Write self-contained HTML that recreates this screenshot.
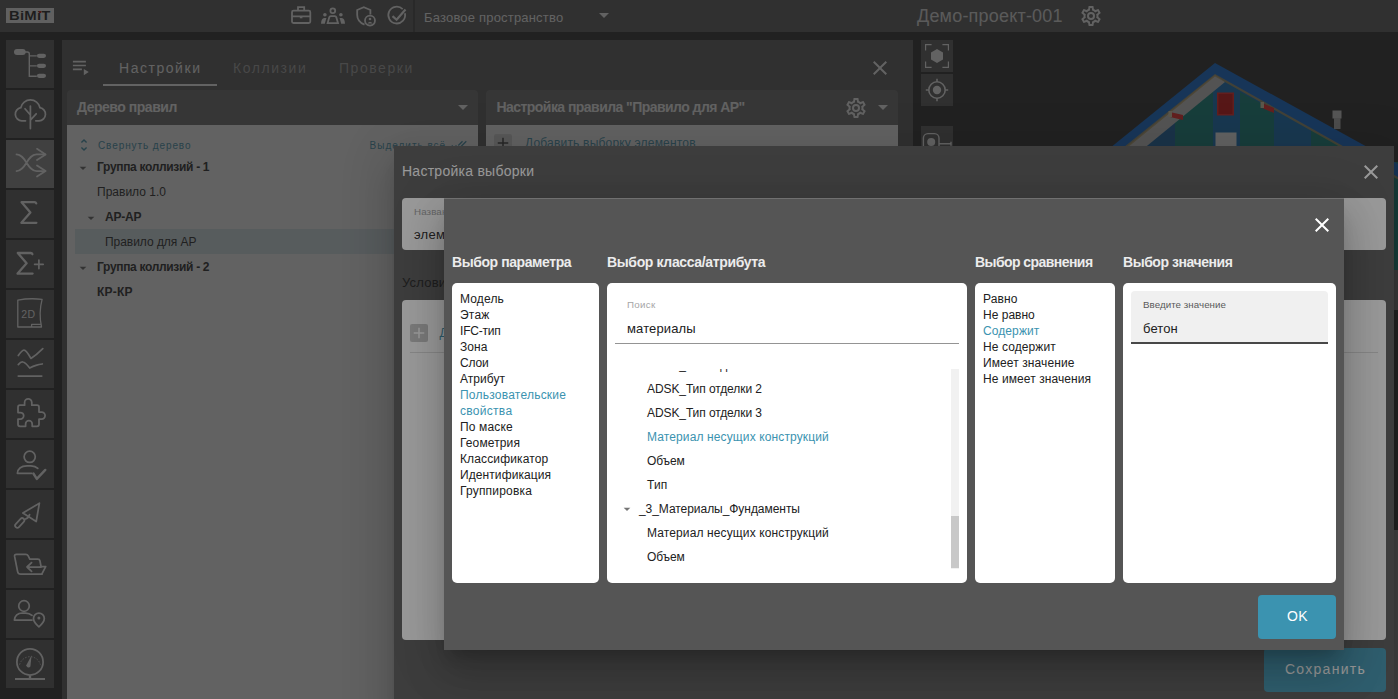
<!DOCTYPE html>
<html lang="ru">
<head>
<meta charset="utf-8">
<title>BIMIT</title>
<style>
*{box-sizing:border-box;margin:0;padding:0}
html,body{width:1398px;height:699px;overflow:hidden;background:#242424}
body{font-family:"Liberation Sans",sans-serif;position:relative;color:#212121}
.abs,.t,.layer,svg.i{position:absolute}
.t{white-space:nowrap;display:block}
.layer{left:0;top:0;width:1398px;height:699px;overflow:hidden}
.scrim{background:rgba(33,33,33,.46)}
/* top bar */
#topbar{left:0;top:0;width:1398px;height:32px;background:#555}
.sb{position:absolute;left:6px;width:48px;height:48px;background:#555}
.sb.sel{background:#8d8d8d}
.tool{position:absolute;left:921px;width:32px;height:32px;background:#555}
#panel{left:62px;top:40px;width:851px;height:659px;background:#555}
.hdr{position:absolute;top:50px;height:35px;background:#6b6b6b;border-radius:4px 4px 0 0}
.hdr .t{font-weight:bold;font-size:14px;line-height:20px;top:7px;color:#fff}
.tab{font-size:14px;letter-spacing:1.25px;line-height:20px;top:18px;color:#a8a8a8}
.tr{font-size:12px;line-height:25px;color:#212121}
.tr.b{font-weight:bold}
.lnk{font-size:10px;letter-spacing:.89px;line-height:16px;color:#3b93b0}
/* dialogs */
.dlg{position:absolute;background:#555;box-shadow:0 11px 15px -7px rgba(0,0,0,.2),0 24px 38px 3px rgba(0,0,0,.14),0 9px 46px 8px rgba(0,0,0,.12)}
.box{position:absolute;background:#fff;border-radius:5px;top:85px;height:300px}
.h2{font-weight:bold;font-size:14px;line-height:20px;top:54px;color:#ececec}
.li{font-size:12px;line-height:16px;color:#212121}
.li.a,.row.a{color:#3b93b0}
.row{font-size:12px;line-height:24px;color:#212121}
.lab{font-size:9.75px;line-height:14px}
.val{font-size:13px;line-height:18px;color:#212121}
.btn{position:absolute;background:#3b93b0;border-radius:4px}
.btn .t{font-size:14px;letter-spacing:1.25px;color:#fff;line-height:20px}
</style>
</head>
<body>
<!-- ================= BASE ================= -->
<div class="layer" id="base">
  <div class="abs" id="topbar"></div>
  <div class="abs" style="left:6px;top:8px;width:48px;height:15px;background:#fafafa;overflow:hidden">
  <span class="t" style="left:3px;top:0;font-size:12.500px;line-height:16px;font-weight:bold;color:#1a1a1a;letter-spacing:.2px;transform-origin:0 50%;transform:scaleX(1.19)">BiMiT</span>
  <div class="abs" style="left:33px;top:3px;width:2.200px;height:2.200px;background:#d00000"></div>
</div>
<svg class="i" style="left:286px;top:2px" width="128" height="28" viewBox="286 2 128 28" fill="none" stroke="#fff" stroke-width="1.800">
  <!-- briefcase -->
  <rect x="292" y="10.7" width="18.3" height="12.3" rx="1.5"/>
  <path d="M298 10.5V7.2h6.2v3.3M292 16.3h18.3"/>
  <rect x="299.8" y="16.3" width="2.6" height="2" fill="#fff" stroke="none"/>
  <!-- people -->
  <circle cx="332.8" cy="10.7" r="2.4"/>
  <path d="M327.6 23.2l1.6-5.8q.4-1.2 1.6-1.2h4q1.2 0 1.6 1.2l1.6 5.8z"/>
  <circle cx="324.9" cy="14.8" r="1.8" fill="#fff" stroke="none"/>
  <circle cx="340.9" cy="14.8" r="1.8" fill="#fff" stroke="none"/>
  <path d="M321 23.8q.3-5.6 3.2-5.8h2.2l-1.6 5.8zM345 23.8q-.3-5.6-3.2-5.8h-2.2l1.6 5.8z" fill="#fff" stroke="none"/>
  <!-- shield -->
  <path d="M364.5 24.6c-4.600-1.800-7.300-5.200-7.300-9.600V10l6.600-2.800 6.600 2.800v4.600"/>
  <circle cx="370" cy="20.600" r="5"/>
  <circle cx="370" cy="19" r="1.300" fill="#fff" stroke="none"/>
  <path d="M367.400 23.600q2.600-3.600 5.200 0z" fill="#fff" stroke="none"/>
  <!-- check circle -->
  <path d="M402.700 9.200a8.400 8.400 0 1 0 2.200 4"/>
  <path d="M392.500 16.200l4.100 3.600 8.900-10.300" stroke-width="2.200"/>
</svg>
<div class="abs" style="left:413px;top:0;width:2px;height:32px;background:#3f3f3f"></div>
<span class="t" style="letter-spacing:0.19px;left:424px;top:9px;font-size:13px;line-height:18px;color:#fff">Базовое пространство</span>
<svg class="i" style="left:591.500px;top:3px" width="24" height="24" viewBox="0 0 24 24"><path fill="#fff" d="M7,10L12,15L17,10H7Z"/></svg>
<span class="t" style="letter-spacing:0.2px;left:917px;top:4px;font-size:18px;line-height:24px;color:#e6e6e6">Демо-проект-001</span>
<svg class="i" style="left:1080.600px;top:6px" width="20" height="20" viewBox="2 2 20 20"><path fill="#fff" d="M12,8A4,4 0 0,1 16,12A4,4 0 0,1 12,16A4,4 0 0,1 8,12A4,4 0 0,1 12,8M12,10A2,2 0 0,0 10,12A2,2 0 0,0 12,14A2,2 0 0,0 14,12A2,2 0 0,0 12,10M10,22C9.750,22 9.540,21.820 9.500,21.580L9.130,18.930C8.500,18.680 7.960,18.340 7.440,17.940L4.950,18.950C4.730,19.030 4.460,18.950 4.340,18.730L2.340,15.270C2.210,15.050 2.270,14.780 2.460,14.630L4.570,12.970L4.500,12L4.570,11L2.460,9.370C2.270,9.220 2.210,8.950 2.340,8.730L4.340,5.270C4.460,5.050 4.730,4.960 4.950,5.050L7.440,6.050C7.960,5.660 8.500,5.320 9.130,5.070L9.500,2.420C9.540,2.180 9.750,2 10,2H14C14.250,2 14.460,2.180 14.500,2.420L14.870,5.070C15.500,5.320 16.040,5.660 16.560,6.050L19.050,5.050C19.270,4.960 19.540,5.050 19.660,5.270L21.660,8.730C21.790,8.950 21.730,9.220 21.540,9.370L19.430,11L19.500,12L19.430,13L21.540,14.630C21.730,14.780 21.790,15.050 21.660,15.270L19.660,18.730C19.540,18.950 19.270,19.040 19.050,18.950L16.560,17.950C16.040,18.340 15.500,18.680 14.870,18.930L14.500,21.580C14.460,21.820 14.250,22 14,22H10M11.250,4L10.880,6.610C9.680,6.860 8.620,7.500 7.850,8.390L5.440,7.350L4.690,8.650L6.800,10.200C6.400,11.370 6.400,12.640 6.800,13.800L4.680,15.360L5.430,16.660L7.860,15.620C8.630,16.500 9.680,17.140 10.870,17.380L11.240,20H12.760L13.130,17.390C14.320,17.140 15.370,16.500 16.140,15.620L18.570,16.660L19.320,15.360L17.200,13.810C17.600,12.640 17.600,11.370 17.200,10.200L19.310,8.650L18.560,7.350L16.150,8.390C15.380,7.500 14.320,6.860 13.120,6.620L12.750,4H11.250Z"/></svg>

  <!-- 1 tree -->
<div class="sb" style="top:40px"><svg width="48" height="48" viewBox="0 0 48 48" fill="none" stroke="#fff" stroke-width="1.400">
  <rect x="8" y="9" width="11.700" height="6" rx="3" fill="#fff" stroke="none"/>
  <path d="M19 12h2.300q2 0 2 2v22.200h7.500M23.300 15.900h7.500M23.300 25.900h7.500"/>
  <rect x="30.900" y="13.700" width="9.100" height="4.300" rx="2.150" fill="#fff" stroke="none"/>
  <rect x="30.900" y="23.700" width="9.100" height="4.300" rx="2.150" fill="#fff" stroke="none"/>
  <rect x="30.900" y="33.700" width="9.100" height="4.300" rx="2.150" fill="#fff" stroke="none"/>
</svg></div>
<!-- 2 cloud tree -->
<div class="sb" style="top:90px"><svg width="48" height="48" viewBox="0 0 48 48" fill="none" stroke="#fff" stroke-width="1.750" stroke-linecap="round">
  <path d="M19.500 30.800h-3.700a6.600 6.600 0 0 1-1-13.100a9.800 9.800 0 0 1 19.200 0a6.600 6.600 0 0 1-1 13.100h-3.200"/>
  <path d="M24.400 16v22.600M19 18.800l5.400 6.200M30.200 23.800l-5.800 6.400"/>
</svg></div>
<!-- 3 shuffle -->
<div class="sb sel" style="top:140px"><svg width="48" height="48" viewBox="0 0 48 48" fill="none" stroke="#fff" stroke-width="1.750" stroke-linecap="round" stroke-linejoin="round">
  <path d="M10.500 14.400c9.500 0 10.500 16.600 20 16.600h8.500M10.500 31c9.500 0 10.500-16.600 20-16.600h8.500"/>
  <path d="M31 8.800l8.600 5.600-8.600 5.600M31 25.400l8.600 5.600-8.600 5.600"/>
</svg></div>
<!-- 4 sigma -->
<div class="sb" style="top:190px"><svg width="48" height="48" viewBox="0 0 48 48" fill="none" stroke="#fff" stroke-width="2.300" stroke-linecap="round" stroke-linejoin="round">
  <path d="M30.200 13.400q-.4-1.200-1.600-1.200H15.600l8.800 10.300-9 10.300h15"/>
</svg></div>
<!-- 5 sigma plus -->
<div class="sb" style="top:240px"><svg width="48" height="48" viewBox="0 0 48 48" fill="none" stroke="#fff" stroke-width="2.300" stroke-linecap="round" stroke-linejoin="round">
  <path d="M26.400 14.200q-.4-1.200-1.600-1.200H11.800l8.800 10.300-9 10.300h15"/>
  <path d="M28.600 24.300h8.600M32.900 20v8.600" stroke-width="1.700"/>
</svg></div>
<!-- 6 2D sheet -->
<div class="sb" style="top:290px"><svg width="48" height="48" viewBox="0 0 48 48" fill="none" stroke="#fff" stroke-width="1.300" stroke-linejoin="round">
  <path d="M11.800 10.200q12-2.400 24.300-.8q-3.600 13.500-.6 27.600H11.800z"/>
  <path d="M25.600 37v-2.600h9.500"/>
  <text x="15.300" y="27.800" font-size="10.500" fill="#fff" stroke="none" letter-spacing=".3">2D</text>
</svg></div>
<!-- 7 chart -->
<div class="sb" style="top:340px"><svg width="48" height="48" viewBox="0 0 48 48" fill="none" stroke="#fff" stroke-width="1.750" stroke-linecap="round" stroke-linejoin="round">
  <path d="M12.300 15.500q3.500-5.200 5.700-5.500 2.400 0 6.900 8.400 5.500-3.400 11.900-9.800"/>
  <path d="M12.300 24.600q2.600-3 4.600-2.600 2.400.4 6.800 6 3.600-2 6.300-2.700 3-.8 6.300-1.300"/>
  <path d="M12.300 36h23.400"/>
</svg></div>
<!-- 8 puzzle -->
<div class="sb" style="top:390px"><svg width="48" height="48" viewBox="0 0 48 48" fill="none" stroke="#fff" stroke-width="1.750" stroke-linejoin="round">
  <path d="M18.600 15.200v-2.800a3.600 3.600 0 0 1 7.200 0v2.800h5.200q2 0 2 2v4.900h2.600a3.500 3.500 0 0 1 0 7h-2.600v5.200q0 2-2 2h-4.800v-2.400a3.300 3.300 0 0 0-6.600 0v2.400h-5.600q-2 0-2-2v-5.200h2.400a3.300 3.300 0 0 0 0-6.600h-2.400v-5.300q0-2 2-2z"/>
</svg></div>
<!-- 9 account check -->
<div class="sb" style="top:440px"><svg width="48" height="48" viewBox="0 0 48 48" fill="none" stroke="#fff" stroke-width="1.750" stroke-linecap="round" stroke-linejoin="round">
  <circle cx="23.700" cy="16.800" r="5.600"/>
  <path d="M25.600 33.300H11.400q.6-7.300 9.600-7.500h4q4.400.1 6.800 2.600"/>
  <path d="M27.400 33.500l3.400 5.400 8.500-9" stroke-width="2.400"/>
</svg></div>
<!-- 10 trowel -->
<div class="sb" style="top:490px"><svg width="48" height="48" viewBox="0 0 48 48" fill="none" stroke="#fff" stroke-width="1.750" stroke-linecap="round" stroke-linejoin="round">
  <path d="M33.400 13.200L16.900 23l13.300 8.500z"/>
  <path d="M23.600 24.600q-1.200 3.500-4.200 4.400"/>
  <rect x="8" y="30.800" width="11.500" height="4.400" rx="2.200" transform="rotate(-47 13.700 33)"/>
</svg></div>
<!-- 11 folder arrow -->
<div class="sb" style="top:540px"><svg width="48" height="48" viewBox="0 0 48 48" fill="none" stroke="#fff" stroke-width="1.750" stroke-linecap="round" stroke-linejoin="round">
  <path d="M35.800 34.200H14.600q-2.400 0-3-2.600L8.600 16.400q-.3-2 1.800-2h9.400q1.600 0 2.500 1.600l1.500 3.200h8q1.800 0 2.200 1.800l1 5.400"/>
  <path d="M35.800 34.200l3.900-7.600h-5.200"/>
  <path d="M35 27H21.400M25.600 22.600L21 27l4.600 4.400"/>
</svg></div>
<!-- 12 account pin -->
<div class="sb" style="top:590px"><svg width="48" height="48" viewBox="0 0 48 48" fill="none" stroke="#fff" stroke-width="1.750" stroke-linecap="round" stroke-linejoin="round">
  <circle cx="18" cy="16" r="5.300"/>
  <path d="M26 30H8.400q.8-6.800 8-7h3.200q3.800 0 6.400 2.400"/>
  <path d="M32.900 36.800q-5.400-4.600-5.400-8.300a5.400 5.400 0 0 1 10.800 0q0 3.700-5.400 8.300z"/>
  <circle cx="32.900" cy="28.100" r="1.500" fill="#fff" stroke="none"/>
</svg></div>
<!-- 13 gauge -->
<div class="sb" style="top:640px"><svg width="48" height="48" viewBox="0 0 48 48" fill="none" stroke="#fff" stroke-width="1.750">
  <circle cx="24" cy="21.900" r="13.100"/>
  <path d="M13.570 24.700A10.800 10.800 0 0 1 34.430 24.700" stroke-width="1" stroke-dasharray="1.600 1.400" opacity=".7"/>
  <path d="M25.600 15.300l-1.200 11.100a2.200 2.200 0 0 1-4.100-1.100z" fill="#fff" stroke="none"/>
  <path d="M24 35.500v3" stroke-width="2.400"/>
  <path d="M9 39h30" stroke-width="2"/>
</svg></div>

  <div class="abs" id="panel">
  <!-- playlist icon -->
  <svg class="i" style="left:10px;top:20px" width="18" height="16" viewBox="0 0 18 16"><path fill="#fff" d="M.9.800h13v1.600H.9zM.9 4.700h13v1.600H.9zM.9 8.600h9v1.600H.9zM11.800 9l5 3.100-5 3.100z"/></svg>
  <span class="t tab" style="letter-spacing:1.54px;left:57px;color:#fff">Настройки</span>
  <span class="t tab" style="letter-spacing:1.55px;left:171px">Коллизии</span>
  <span class="t tab" style="letter-spacing:1.54px;left:277px">Проверки</span>
  <div class="abs" style="left:41px;top:44px;width:114px;height:2px;background:#fff"></div>
  <svg class="i" style="left:805.700px;top:16.400px" width="24" height="24" viewBox="0 0 24 24"><path fill="#fff" d="M19,6.410L17.590,5L12,10.590L6.410,5L5,6.410L10.590,12L5,17.590L6.410,19L12,13.410L17.590,19L19,17.590L13.410,12L19,6.410Z"/></svg>
  <!-- tree card -->
  <div class="hdr" style="left:5px;width:411px">
    <span class="t" style="letter-spacing:-0.48px;left:10px">Дерево правил</span>
    <svg class="i" style="left:384px;top:5px" width="24" height="24" viewBox="0 0 24 24"><path fill="#fff" d="M7,10L12,15L17,10H7Z"/></svg>
  </div>
  <div class="abs" style="left:5px;top:85px;width:411px;height:574px;background:#fff">
    <svg class="i" style="left:9px;top:11.500px" width="16" height="16" viewBox="0 0 24 24"><path fill="#3b93b0" d="M12,18.170L8.830,15L7.410,16.410L12,21L16.590,16.410L15.170,15M12,5.830L15.170,9L16.580,7.590L12,3L7.410,7.590L8.830,9L12,5.830Z"/></svg>
    <span class="t lnk" style="letter-spacing:0.9px;left:31px;top:13px">Свернуть дерево</span>
    <span class="t lnk" style="letter-spacing:0.99px;left:302.600px;top:13px">Выделить всё</span>
    <svg class="i" style="left:384px;top:12px" width="16" height="16" viewBox="0 0 24 24"><path fill="#3b93b0" d="M0.410,13.410L6,19L7.410,17.580L1.830,12M22.240,5.580L11.660,16.170L7.500,12L6.070,13.410L11.660,19L23.660,7M18,7L16.590,5.580L10.240,11.930L11.660,13.340L18,7Z"/></svg>
    <div class="abs" style="left:8px;top:104px;width:395px;height:25px;background:#dcebf0"></div>
    <svg class="i" style="left:8px;top:34.500px" width="16" height="16" viewBox="0 0 24 24"><path fill="#616161" d="M7,10L12,15L17,10H7Z"/></svg>
    <span class="t tr b" style="letter-spacing:-0.32px;left:30px;top:30px">Группа коллизий - 1</span>
    <span class="t tr" style="letter-spacing:0.01px;left:30px;top:55px">Правило 1.0</span>
    <svg class="i" style="left:16px;top:84.500px" width="16" height="16" viewBox="0 0 24 24"><path fill="#616161" d="M7,10L12,15L17,10H7Z"/></svg>
    <span class="t tr b" style="letter-spacing:-0.2px;left:38px;top:80px">АР-АР</span>
    <span class="t tr" style="letter-spacing:-0.04px;left:38px;top:105px">Правило для АР</span>
    <svg class="i" style="left:8px;top:134.500px" width="16" height="16" viewBox="0 0 24 24"><path fill="#616161" d="M7,10L12,15L17,10H7Z"/></svg>
    <span class="t tr b" style="letter-spacing:-0.32px;left:30px;top:130px">Группа коллизий - 2</span>
    <span class="t tr b" style="letter-spacing:0.21px;left:30px;top:155px">КР-КР</span>
  </div>
  <!-- rule card -->
  <div class="hdr" style="left:424px;width:412px">
    <span class="t" style="letter-spacing:-0.55px;left:10.500px">Настройка правила "Правило для АР"</span>
    <svg class="i" style="left:359.500px;top:7.500px" width="20" height="20" viewBox="2 2 20 20"><path fill="#fff" d="M12,8A4,4 0 0,1 16,12A4,4 0 0,1 12,16A4,4 0 0,1 8,12A4,4 0 0,1 12,8M12,10A2,2 0 0,0 10,12A2,2 0 0,0 12,14A2,2 0 0,0 14,12A2,2 0 0,0 12,10M10,22C9.750,22 9.540,21.820 9.500,21.580L9.130,18.930C8.500,18.680 7.960,18.340 7.440,17.940L4.950,18.950C4.730,19.030 4.460,18.950 4.340,18.730L2.340,15.270C2.210,15.050 2.270,14.780 2.460,14.630L4.570,12.970L4.500,12L4.570,11L2.460,9.370C2.270,9.220 2.210,8.950 2.340,8.730L4.340,5.270C4.460,5.050 4.730,4.960 4.950,5.050L7.440,6.050C7.960,5.660 8.500,5.320 9.130,5.070L9.500,2.420C9.540,2.180 9.750,2 10,2H14C14.250,2 14.460,2.180 14.500,2.420L14.870,5.070C15.500,5.320 16.040,5.660 16.560,6.050L19.050,5.050C19.270,4.960 19.540,5.050 19.660,5.270L21.660,8.730C21.790,8.950 21.730,9.220 21.540,9.370L19.430,11L19.500,12L19.430,13L21.540,14.630C21.730,14.780 21.790,15.050 21.660,15.270L19.660,18.730C19.540,18.950 19.270,19.040 19.050,18.950L16.560,17.950C16.040,18.340 15.500,18.680 14.870,18.930L14.500,21.580C14.460,21.820 14.250,22 14,22H10M11.250,4L10.880,6.610C9.680,6.860 8.620,7.500 7.850,8.390L5.440,7.350L4.690,8.650L6.800,10.200C6.400,11.370 6.400,12.640 6.800,13.800L4.680,15.360L5.430,16.660L7.860,15.620C8.630,16.500 9.680,17.140 10.870,17.380L11.240,20H12.760L13.130,17.390C14.320,17.140 15.370,16.500 16.140,15.620L18.570,16.660L19.320,15.360L17.200,13.810C17.600,12.640 17.600,11.370 17.200,10.200L19.310,8.650L18.560,7.350L16.150,8.390C15.380,7.500 14.320,6.860 13.120,6.620L12.750,4H11.250Z"/></svg>
    <svg class="i" style="left:384.700px;top:5px" width="24" height="24" viewBox="0 0 24 24"><path fill="#fff" d="M7,10L12,15L17,10H7Z"/></svg>
  </div>
  <div class="abs" style="left:424px;top:85px;width:412px;height:574px;background:#fff">
    <div class="abs" style="left:8px;top:9px;width:18px;height:18px;background:#dedede;border-radius:2px">
      <svg class="i" style="left:0;top:0" width="18" height="18" viewBox="0 0 24 24"><path fill="#333" d="M19,13H13V19H11V13H5V11H11V5H13V11H19V13Z"/></svg>
    </div>
    <span class="t" style="letter-spacing:0.19px;left:39px;top:10px;font-size:12px;line-height:16px;color:#3b93b0">Добавить выборку элементов</span>
  </div>
</div>
<!-- right tools -->
<div class="tool" style="top:40px"><svg width="32" height="32" viewBox="0 0 32 32" fill="none" stroke="#fff" stroke-width="1.200">
  <path d="M4.600 10.600V4.600h6M21.400 4.600h6v6M27.400 21.400v6h-6M10.600 27.400h-6v-6"/>
  <path d="M16 9l6 3.500v7L16 23l-6-3.500v-7z" fill="#fff" stroke="none"/>
</svg></div>
<div class="tool" style="top:74px"><svg width="32" height="32" viewBox="0 0 32 32" fill="none" stroke="#fff" stroke-width="1.600">
  <circle cx="16" cy="16" r="8.200"/><circle cx="16" cy="16" r="4.200" fill="#fff" stroke="none"/>
  <path d="M16 4.800v3M16 24.200v3M4.800 16h3M24.200 16h3"/>
</svg></div>
<div class="tool" style="top:126px"><svg width="32" height="32" viewBox="0 0 32 32" fill="none" stroke="#fff" stroke-width="1.400">
  <rect x="2.400" y="7.600" width="15.600" height="17" rx="4.500"/><circle cx="10.200" cy="16" r="4" fill="#fff" stroke="none"/>
  <path d="M18 17.800h12M30 15.800v4" />
</svg></div>

  <svg class="i" style="left:1090px;top:50px" width="308" height="649" viewBox="1090 50 308 649">
  <!-- walls -->
  <path d="M1215 75L1128 146v130h270V172z" fill="#0470c2"/>
  <path d="M1213 78l-38 32v200h38z" fill="#00847d"/>
  <path d="M1240 92l34 18v200h-34z" fill="#00847d"/>
  <path d="M1175 110l-36 30v170h36z" fill="#0a5fa8"/>
  <path d="M1311 130l40 20v160h-40z" fill="#00847d"/>
  <rect x="1394" y="162" width="4" height="108" fill="#00847d"/><rect x="1394" y="270" width="4" height="40" fill="#777"/><rect x="1394" y="310" width="4" height="220" fill="#242424"/><rect x="1394" y="530" width="4" height="169" fill="#909090"/>
  <!-- grey soffit left -->
  <path d="M1215 74l10 8-83 68h-22z" fill="#d0d0d0"/>
  <!-- roof -->
  <path d="M1215 63L1110 148l10 4 95-77 183 103v-14z" fill="#0068e0"/>
  <path d="M1215 74l183 103v2.500L1215 76.500l-93 75.500-3-1z" fill="#b79a55" opacity=".8"/>
  <!-- window, door -->
  <rect x="1217" y="92.500" width="17" height="23" fill="#ff1a1a"/>
  <rect x="1218.500" y="94" width="14" height="20" fill="#d80000"/>
  <rect x="1215.500" y="132.500" width="21" height="30" fill="#fff"/>
  <!-- brackets -->
  <path d="M1170 112l13 3v5l-13-3z" fill="#ff1a1a"/><rect x="1168.500" y="111" width="3.500" height="6" fill="#e9d9b0"/>
  <path d="M1262 103l12 5v5l-12-5z" fill="#ff1a1a"/><rect x="1260.500" y="102" width="3.500" height="6" fill="#e9d9b0"/>
  <!-- chimney -->
  <rect x="1332.500" y="110.500" width="9" height="8" fill="#d5d5d5"/><rect x="1334" y="118" width="6.500" height="11" fill="#b5b5b5"/>
</svg>

</div>
<div class="layer scrim"></div>
<!-- ================= DIALOG 1 ================= -->
<div class="layer" id="l1">
  <div class="dlg" id="d1" style="left:394px;top:146px;width:1000px;height:580px">
  <span class="t" style="letter-spacing:0.26px;left:8px;top:15px;font-size:14px;line-height:20px;color:#fff">Настройка выборки</span>
  <svg class="i" style="left:965px;top:14px" width="24" height="24" viewBox="0 0 24 24"><path fill="#fff" d="M19,6.41L17.59,5L12,10.59L6.41,5L5,6.41L10.59,12L5,17.59L6.41,19L12,13.41L17.59,19L19,17.59L13.41,12L19,6.41Z"/></svg>
  <div class="abs" style="left:8px;top:52px;width:984px;height:52px;background:#fff;border-radius:4px">
    <span class="t lab" style="letter-spacing:0.12px;left:12px;top:7px;color:#9e9e9e">Название</span>
    <span class="t val" style="letter-spacing:0.24px;left:12px;top:28px">элементы</span>
  </div>
  <span class="t" style="letter-spacing:0.21px;left:8px;top:128px;font-size:13px;line-height:18px;color:#1c1c1c">Условия</span>
  <div class="abs" style="left:8px;top:154px;width:984px;height:340px;background:#fff;border-radius:4px">
    <div class="abs" style="left:8px;top:24px;width:18px;height:18px;background:#c4c4c4;border-radius:2px">
      <svg class="i" style="left:0;top:0" width="18" height="18" viewBox="0 0 24 24"><path fill="#fff" d="M19,13H13V19H11V13H5V11H11V5H13V11H19V13Z"/></svg>
    </div>
    <span class="t" style="letter-spacing:0.13px;left:37.500px;top:25px;font-size:12px;line-height:16px;color:#3b93b0">Добавить условие</span>
    <div class="abs" style="left:8px;top:52px;width:968px;height:1px;background:#dcdcdc"></div>
  </div>
  <div class="btn" style="left:870px;top:502px;width:122px;height:44px"><span class="t" style="letter-spacing:1.28px;left:0;width:122px;text-align:center;top:11px;padding-left:1px">Сохранить</span></div>
</div>

</div>
<div class="layer scrim"></div>
<!-- ================= DIALOG 2 ================= -->
<div class="layer" id="l2">
  <div class="dlg" id="d2" style="left:444px;top:198px;width:900px;height:452px">
  <div class="abs" style="left:0;top:0;width:900px;height:1px;background:#707070"></div>
  <svg class="i" style="left:866px;top:15px" width="24" height="24" viewBox="0 0 24 24"><path fill="#fff" d="M19,6.41L17.59,5L12,10.59L6.41,5L5,6.41L10.59,12L5,17.59L6.41,19L12,13.41L17.59,19L19,17.59L13.41,12L19,6.41Z"/></svg>
  <span class="t h2" style="letter-spacing:-0.42px;left:8px">Выбор параметра</span>
  <span class="t h2" style="letter-spacing:-0.36px;left:163px">Выбор класса/атрибута</span>
  <span class="t h2" style="letter-spacing:-0.56px;left:531px">Выбор сравнения</span>
  <span class="t h2" style="letter-spacing:-0.45px;left:679px">Выбор значения</span>
  <!-- box 1 -->
  <div class="box" style="left:8px;width:147px">
    <span class="t li" style="letter-spacing:0.15px;left:8px;top:8px">Модель</span>
    <span class="t li" style="letter-spacing:0.2px;left:8px;top:24px">Этаж</span>
    <span class="t li" style="letter-spacing:-0.2px;left:8px;top:40px">IFC-тип</span>
    <span class="t li" style="letter-spacing:0.05px;left:8px;top:56px">Зона</span>
    <span class="t li" style="letter-spacing:-0.16px;left:8px;top:72px">Слои</span>
    <span class="t li" style="letter-spacing:0.05px;left:8px;top:88px">Атрибут</span>
    <span class="t li a" style="letter-spacing:0.23px;left:8px;top:104px">Пользовательские</span>
    <span class="t li a" style="letter-spacing:0.29px;left:8px;top:120px">свойства</span>
    <span class="t li" style="letter-spacing:0.15px;left:8px;top:136px">По маске</span>
    <span class="t li" style="letter-spacing:0.12px;left:8px;top:152px">Геометрия</span>
    <span class="t li" style="letter-spacing:0.13px;left:8px;top:168px">Классификатор</span>
    <span class="t li" style="letter-spacing:0.09px;left:8px;top:184px">Идентификация</span>
    <span class="t li" style="letter-spacing:0.19px;left:8px;top:200px">Группировка</span>
  </div>
  <!-- box 2 -->
  <div class="box" style="left:163px;width:360px">
    <span class="t lab" style="letter-spacing:0.3px;left:20px;top:15px;color:#a6a6a6">Поиск</span>
    <span class="t val" style="letter-spacing:0.13px;left:20px;top:37px">материалы</span>
    <div class="abs" style="left:8px;top:60px;width:344px;height:1px;background:#949494"></div>
    <div class="abs" style="left:8px;top:86px;width:344px;height:200px;overflow:hidden">
      <span class="t row" style="letter-spacing:-0.09px;left:32px;top:-16px">ADSK_Тип отделки 1</span>
      <span class="t row" style="letter-spacing:-0.09px;left:32px;top:8px">ADSK_Тип отделки 2</span>
      <span class="t row" style="letter-spacing:-0.09px;left:32px;top:32px">ADSK_Тип отделки 3</span>
      <span class="t row a" style="letter-spacing:0.12px;left:32px;top:56px">Материал несущих конструкций</span>
      <span class="t row" style="letter-spacing:-0.12px;left:32px;top:80px">Объем</span>
      <span class="t row" style="letter-spacing:0.12px;left:32px;top:104px">Тип</span>
      <svg class="i" style="left:4px;top:132px" width="16" height="16" viewBox="0 0 24 24"><path fill="#757575" d="M7,10L12,15L17,10H7Z"/></svg>
      <span class="t row" style="letter-spacing:-0.05px;left:24px;top:128px">_3_Материалы_Фундаменты</span>
      <span class="t row" style="letter-spacing:0.12px;left:32px;top:152px">Материал несущих конструкций</span>
      <span class="t row" style="letter-spacing:-0.12px;left:32px;top:176px">Объем</span>
      <div class="abs" style="left:336px;top:0;width:8px;height:200px;background:#f1f1f1"></div>
      <div class="abs" style="left:336px;top:147px;width:8px;height:52px;background:#c8c8c8"></div>
    </div>
  </div>
  <!-- box 3 -->
  <div class="box" style="left:531px;width:140px">
    <span class="t li" style="letter-spacing:0.14px;left:8px;top:8px">Равно</span>
    <span class="t li" style="letter-spacing:0.01px;left:8px;top:24px">Не равно</span>
    <span class="t li a" style="letter-spacing:0.09px;left:8px;top:40px">Содержит</span>
    <span class="t li" style="letter-spacing:0.09px;left:8px;top:56px">Не содержит</span>
    <span class="t li" style="letter-spacing:0.1px;left:8px;top:72px">Имеет значение</span>
    <span class="t li" style="letter-spacing:0.08px;left:8px;top:88px">Не имеет значения</span>
  </div>
  <!-- box 4 -->
  <div class="box" style="left:679px;width:213px">
    <div class="abs" style="left:8px;top:8px;width:197px;height:53px;background:#f0f0f0;border-radius:4px 4px 0 0;border-bottom:2px solid #484848"></div>
    <span class="t lab" style="letter-spacing:0.05px;left:20px;top:15px;color:#5a5a5a">Введите значение</span>
    <span class="t val" style="letter-spacing:0.12px;left:20px;top:37px">бетон</span>
  </div>
  <div class="btn" style="left:814px;top:397px;width:78px;height:44px"><span class="t" style="letter-spacing:0.34px;left:0;width:78px;text-align:center;top:11px;padding-left:1px">OK</span></div>
</div>

</div>
</body>
</html>
